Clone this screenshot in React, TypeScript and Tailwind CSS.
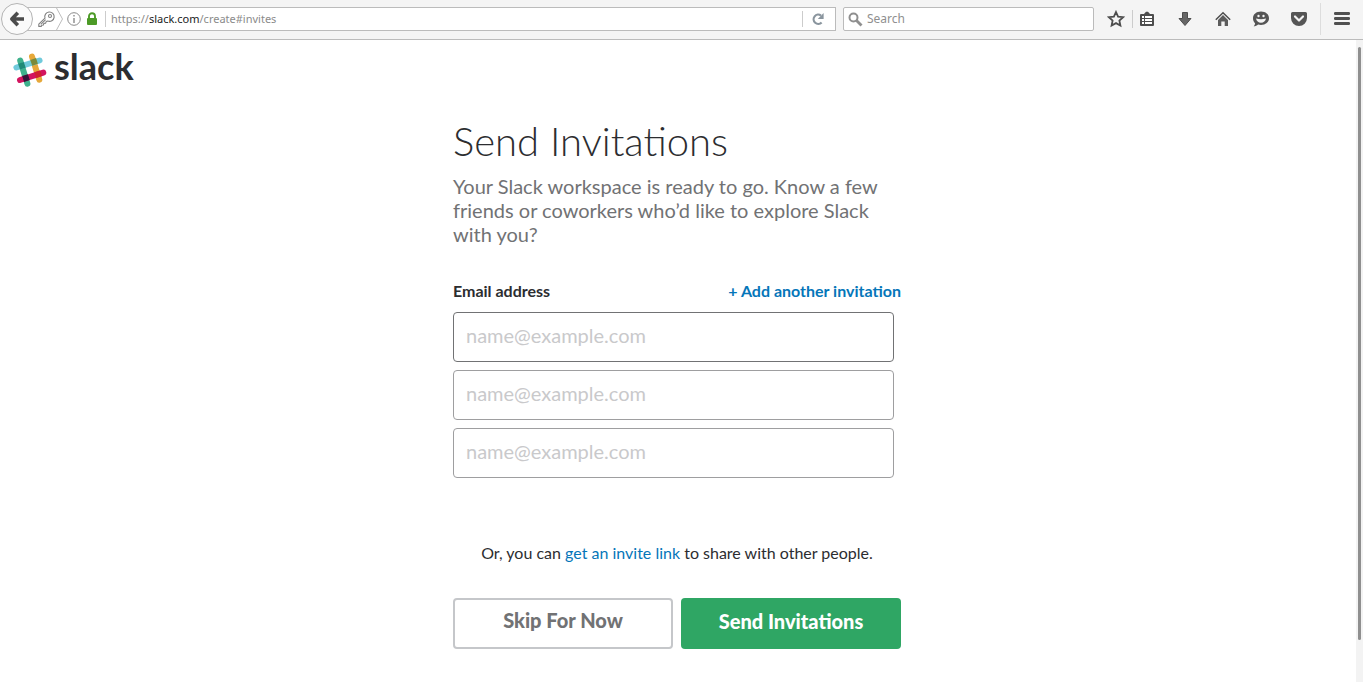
import { useState } from "react";
import type { ReactNode } from "react";

function ToolButton({ label, className, children }: { label: string; className: string; children: ReactNode }) {
  return (
    <button type="button" aria-label={label} className={`flex h-8 shrink-0 items-center justify-center text-[#555] ${className}`}>
      {children}
    </button>
  );
}

function BrowserBar() {
  return (
    <header className="flex h-10 shrink-0 items-center border-b border-[#bbb] bg-[#f4f4f4] pb-px pl-px font-['Noto_Sans',sans-serif] text-[12px]">
      <button
        type="button"
        aria-label="Back"
        className="z-10 flex size-8 shrink-0 items-center justify-center rounded-full border border-[#b4b4b4] bg-[#fafafa]"
      >
        <svg width="16" height="16" viewBox="0 0 16 16" fill="none" stroke="#4b4b4b" strokeWidth="3.6">
          <path d="M8.8 1.8 2.8 8l6 6.2M3 8h12" strokeLinejoin="round" />
        </svg>
      </button>
      <div className="-ml-2 flex h-6 min-w-0 flex-1 items-center border border-[#bbb] bg-white pl-3">
        <svg className="shrink-0" width="17" height="18" viewBox="0 0 17 18" fill="none" stroke="#808080" strokeWidth="1.1">
          <path d="M7 8.2a4.700 4.700 0 1 1 2.800 2.900L8.200 11.600 7.600 13.200 5.800 13.400 5.400 15 3.800 15.200 3.200 16.400H.8v-2.200Z" strokeLinejoin="round" />
          <path d="M2.800 14.400 7.600 9.600" />
          <circle cx="12" cy="6" r="1.5" />
        </svg>
        <svg className="shrink-0" width="9" height="22" viewBox="0 0 9 22" fill="none" stroke="#bdbdbd">
          <path d="M1.5 0 7.500 11 1.500 22" />
        </svg>
        <button type="button" aria-label="Site information" className="ml-[3px] shrink-0">
          <svg width="14" height="14" viewBox="0 0 14 14" fill="none" stroke="#8a8a8a">
            <circle cx="7" cy="7" r="6.3" />
            <path d="M7 6v5M7 3v1.6" strokeWidth="1.4" />
          </svg>
        </button>
        <svg className="ml-[5px] shrink-0" width="12" height="14" viewBox="0 0 12 14">
          <path d="M3 7V4.2a3 3 0 0 1 6 0V7" fill="none" stroke="#4c9a26" strokeWidth="1.9" />
          <rect x="1" y="6" width="10" height="7" rx="1" fill="#4c9a26" />
        </svg>
        <span className="mr-[5px] ml-[7px] h-4 w-px shrink-0 bg-[#ccc]" />
        <span className="min-w-0 flex-1 truncate text-[11px] text-[#8b8b8b]">
          https://<span className="text-[#222]">slack.com</span>/create#invites
        </span>
        <button type="button" aria-label="Reload" className="flex h-4 w-[33px] shrink-0 items-center justify-center border-l border-[#ccc] pr-0.5">
          <svg width="14" height="14" viewBox="0 0 14 14">
            <path d="M10.600 10.400a4.600 4.600 0 1 1-.6-6.800" fill="none" stroke="#8a959e" strokeWidth="2.2" />
            <path d="M12.600 1v6H6.800Z" fill="#8a959e" />
          </svg>
        </button>
      </div>
      <label className="ml-[7px] flex h-6 w-[251px] shrink-0 items-center gap-1 rounded-[2px] border border-[#bbb] bg-white pl-1">
        <svg className="shrink-0" width="15" height="15" viewBox="0 0 15 15" fill="none" stroke="#8f8f8f">
          <circle cx="5.5" cy="5.5" r="4" strokeWidth="2" />
          <path d="m8.5 8.500 5 5" strokeWidth="2.8" />
        </svg>
        <input type="text" aria-label="Search" placeholder="Search" className="min-w-0 flex-1 bg-transparent outline-none placeholder:text-[#8f8f8f]" />
      </label>
      <ToolButton label="Bookmark" className="ml-[6px] w-8">
        <svg width="18" height="18" viewBox="0 0 18 18" fill="none" stroke="#4d4d4d" strokeWidth="1.8">
          <path d="m9 2 2.100 4.600 5 .600-3.700 3.400 1 5L9 13.100l-4.400 2.500 1-5L1.900 7.200l5-.600Z" />
        </svg>
      </ToolButton>
      <span className="h-[18px] w-px bg-[#ccc]" />
      <ToolButton label="Bookmarks list" className="w-7">
        <svg width="16" height="16" viewBox="0 0 16 16">
          <path d="M2 3h3l2-2.200h2L11 3h3a1 1 0 0 1 1 1v10a1 1 0 0 1-1 1H2a1 1 0 0 1-1-1V4a1 1 0 0 1 1-1Z" fill="#4d4d4d" />
          <path d="M3 5h2v2H3zM6 5h7v2H6zM3 8h2v2H3zM6 8h7v2H6zM3 11h2v2H3zM6 11h7v2H6z" fill="#fff" />
        </svg>
      </ToolButton>
      <ToolButton label="Downloads" className="ml-[5px] w-[38px]">
        <svg width="16" height="16" viewBox="0 0 16 16" fill="#666" stroke="#4d4d4d">
          <path d="M5.500 1.500h5v6H14L8 14.500 2 7.500h3.500Z" strokeLinejoin="round" />
        </svg>
      </ToolButton>
      <ToolButton label="Home" className="w-[38px]">
        <svg width="16" height="16" viewBox="0 0 16 16">
          <path d="M.8 8.800 8 1.800l7.200 7" fill="none" stroke="#4d4d4d" strokeWidth="1.500" />
          <path d="M3 9 8 4l5 5v6H9.700v-4.500H6.300V15H3Z" fill="#5c5c5c" />
        </svg>
      </ToolButton>
      <ToolButton label="Chat" className="w-[38px]">
        <svg width="18" height="16" viewBox="0 0 18 16">
          <path d="M9 .500c4.600 0 8 2.800 8 6.700s-3.400 6.700-8 6.700c-1 0-2-.100-2.900-.400C4.900 14.600 3.300 15.300 1.700 15.300c.8-.8 1.300-1.900 1.400-3.100C1.700 11 1 9.200 1 7.200 1 3.300 4.400.500 9 .500Z" fill="#555" />
          <circle cx="6.500" cy="5" r="1.200" fill="#f4f4f4" />
          <circle cx="11.500" cy="5" r="1.200" fill="#f4f4f4" />
          <path d="M4 7.600c3.300 1 6.700 1 10 0-.4 2.600-2.400 4.200-5 4.200s-4.600-1.600-5-4.200Z" fill="#f4f4f4" />
        </svg>
      </ToolButton>
      <ToolButton label="Pocket" className="w-[38px]">
        <svg width="18" height="16" viewBox="0 0 18 16">
          <path d="M2.500 1h13A1.500 1.500 0 0 1 17 2.500V7A8 8 0 0 1 1 7V2.500A1.500 1.500 0 0 1 2.500 1Z" fill="#555" />
          <path d="m5 5.500 4 4 4-4" fill="none" stroke="#f4f4f4" strokeWidth="2.200" strokeLinecap="round" strokeLinejoin="round" />
        </svg>
      </ToolButton>
      <span className="ml-[2px] h-8 w-px bg-[#ddd]" />
      <ToolButton label="Menu" className="w-[42px]">
        <svg width="16" height="14" viewBox="0 0 16 14" fill="#505050">
          <rect y="0" width="16" height="3" rx="1.200" />
          <rect y="5" width="16" height="3" rx="1.200" />
          <rect y="10" width="16" height="3" rx="1.200" />
        </svg>
      </ToolButton>
    </header>
  );
}

function SlackLogo() {
  return (
    <a href="#home" aria-label="Slack" className="flex items-start gap-[7px]">
      <svg width="34" height="36" viewBox="0 0 34 36" fill="none" strokeWidth="6" strokeLinecap="round">
        <path d="M19 4.700 26.300 27.700" stroke="#e6a83a" />
        <path d="M7.200 8.500 14.400 31.700" stroke="#3eb18c" />
        <path d="M3.400 15.500 26.600 8.500" stroke="#70cadb" />
        <path d="M7 28 30.300 20.700" stroke="#d3145f" />
        <g transform="translate(-.2 .7)">
          <path d="m5.300 11.100 5.700-1.800 1.900 5.700-5.700 1.900Z" fill="#1f8a76" />
          <path d="m17.500 7.200 5.700-1.800 1.900 5.700-5.700 1.900Z" fill="#7a8a3a" />
          <path d="m9.400 23.400 5.700-1.800 1.900 5.700-5.700 1.900Z" fill="#361238" />
          <path d="m21.600 19.500 5.700-1.800 1.900 5.700-5.700 1.900Z" fill="#d02030" />
        </g>
      </svg>
      <span className="text-[36px] leading-7 font-bold text-[#2c2d30]">slack</span>
    </a>
  );
}

const fieldIds = ["email-1", "email-2", "email-3"];

export default function App() {
  const [fields, setFields] = useState(fieldIds);
  return (
    <div className="flex min-h-screen flex-col bg-white font-['Lato',sans-serif] text-[#2c2d30]">
      <BrowserBar />
      <div className="flex flex-1">
        <div className="min-w-0 flex-1 pr-0.5">
          <div className="flex px-[13px] pt-3">
            <SlackLogo />
          </div>
          <main className="mx-auto w-full max-w-md pt-7 pb-6">
            <h1 className="text-[40px] leading-[50px] font-light">Send Invitations</h1>
            <p className="mt-2 text-[20px] leading-6 text-[#717274]">
              Your Slack workspace is ready to go. Know a few friends or coworkers who’d like to explore Slack with you?
            </p>
            <form onSubmit={(e) => e.preventDefault()}>
              <div className="mt-[33px] flex items-center justify-between text-[16px] leading-6 font-bold">
                <label htmlFor="email-1">Email address</label>
                <button
                  type="button"
                  className="text-[#0576b9]"
                  onClick={() => setFields([...fields, `email-${fields.length + 1}`])}
                >
                  + Add another invitation
                </button>
              </div>
              <div className="mt-[9px] flex flex-col gap-2 pr-[7px]">
                {fields.map((id) => (
                  <input
                    key={id}
                    id={id}
                    type="email"
                    aria-label="Email address"
                    placeholder="name@example.com"
                    className="h-[50px] w-full rounded-[4px] border border-[#9e9ea0] px-3 pb-1 text-[20px] outline-none first:border-[#717274] placeholder:text-[#c9c9cb]"
                  />
                ))}
              </div>
              <p className="mt-[63px] text-center text-[16px] leading-6">
                Or, you can{" "}
                <a href="#invite-link" className="text-[#0576b9]">
                  get an invite link
                </a>{" "}
                to share with other people.
              </p>
              <div className="mt-[33px] grid grid-cols-2 gap-2 text-[20px] font-black">
                <button type="button" className="h-[51px] rounded-[4px] border-2 border-[#c5c7ca] pb-2 text-[#717274]">
                  Skip For Now
                </button>
                <button type="submit" className="h-[51px] rounded-[4px] bg-[#2fa664] pb-1.5 text-white">
                  Send Invitations
                </button>
              </div>
            </form>
          </main>
        </div>
        <div className="flex w-[7px] shrink-0 flex-col items-center bg-[#f3f3f3] pt-[7px] pb-[42px]">
          <div className="w-[3px] flex-1 rounded-full bg-[#8f8f8f]" />
        </div>
      </div>
    </div>
  );
}
